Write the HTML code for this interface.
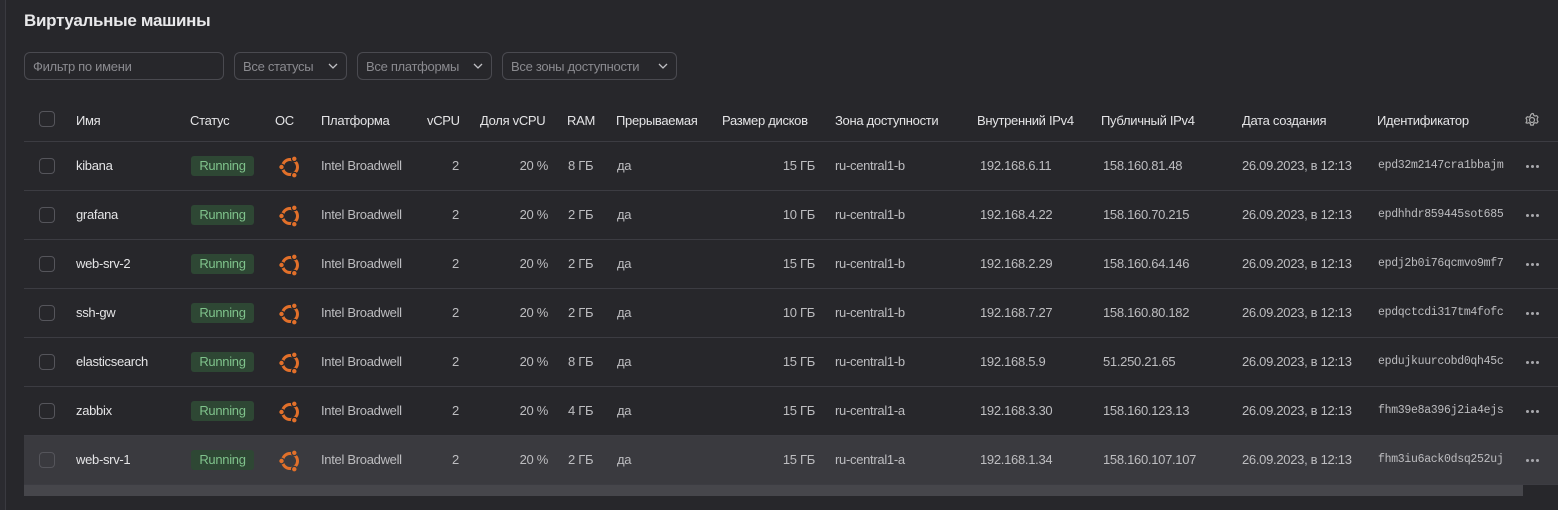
<!DOCTYPE html>
<html><head><meta charset="utf-8"><style>
*{margin:0;padding:0;box-sizing:border-box}
body{width:1558px;height:510px;background:#27272b;font-family:"Liberation Sans","DejaVu Sans",sans-serif;font-size:13px;color:#bdbdc0;position:relative;overflow:hidden;letter-spacing:-0.3px}
.a{position:absolute;white-space:nowrap}
.leftbar{position:absolute;left:0;top:0;width:6px;height:510px;background:#2b2b30;border-right:1px solid #3a3a40}
h1{position:absolute;left:24px;top:11px;font-size:17px;font-weight:bold;color:#e8e8ea;letter-spacing:-0.3px}
.inp{position:absolute;top:52px;height:28px;border:1px solid #4a4a50;border-radius:6px;color:#8a8a8f;padding:6px 8px;font-size:13px}
.inp svg{position:absolute;right:8px;top:10px}
.row{position:absolute;left:24px;width:1534px;height:49px;border-bottom:1px solid #3c3c42}
.hl{background:#3a3a3f}
.cb{position:absolute;left:15px;width:16px;height:16px;border:1px solid #55555b;border-radius:4px;top:16px}
.h{color:#e4e4e6;top:113px}
.badge{position:absolute;left:167px;top:14px;width:63px;height:20px;background:#2e4734;border-radius:3px;color:#7fc28b;text-align:center;line-height:20px}
.t{position:absolute;top:16px}
.r{text-align:right}
.m{font-family:"Liberation Mono","DejaVu Sans Mono",monospace;font-size:11.5px;color:#bdbdc0;width:134px;overflow:hidden;top:17px}
.dots{position:absolute;left:1502px;top:23px}
.dots i{display:inline-block;width:3px;height:3px;border-radius:50%;background:#a8a8ad;margin-right:2px;vertical-align:top}
</style></head><body>
<div class="leftbar"></div>
<h1>Виртуальные машины</h1>
<div class="inp" style="left:24px;width:200px">Фильтр по имени</div>
<div class="inp" style="left:234px;width:113px">Все статусы<svg width="10" height="6"><path d="M1 1l4 4 4-4" stroke="#c0c0c4" fill="none" stroke-width="1.3"/></svg></div>
<div class="inp" style="left:357px;width:135px">Все платформы<svg width="10" height="6"><path d="M1 1l4 4 4-4" stroke="#c0c0c4" fill="none" stroke-width="1.3"/></svg></div>
<div class="inp" style="left:502px;width:175px">Все зоны доступности<svg width="10" height="6"><path d="M1 1l4 4 4-4" stroke="#c0c0c4" fill="none" stroke-width="1.3"/></svg></div>

<div class="row" style="top:96px;height:46px"><div class="cb" style="top:15px"></div></div>
<div class="a h" style="left:76px">Имя</div>
<div class="a h" style="left:190px">Статус</div>
<div class="a h" style="left:275px">ОС</div>
<div class="a h" style="left:321px">Платформа</div>
<div class="a h" style="left:427px">vCPU</div>
<div class="a h" style="left:480px">Доля vCPU</div>
<div class="a h" style="left:567px">RAM</div>
<div class="a h" style="left:616px">Прерываемая</div>
<div class="a h" style="left:722px">Размер дисков</div>
<div class="a h" style="left:835px">Зона доступности</div>
<div class="a h" style="left:977px">Внутренний IPv4</div>
<div class="a h" style="left:1101px">Публичный IPv4</div>
<div class="a h" style="left:1242px">Дата создания</div>
<div class="a h" style="left:1377px">Идентификатор</div>
<svg class="a" style="left:1524px;top:112px" width="16" height="16" viewBox="0 0 16 16"><circle cx="8" cy="8" r="2.5" fill="none" stroke="#aaa" stroke-width="1.2"/><path d="M8 1.5l1.3.2.4 1.6 1.4.8 1.6-.5 1.3 1.5-.8 1.5v1.6l.8 1.5-1.3 1.5-1.6-.5-1.4.8-.4 1.6H6.7l-.4-1.6-1.4-.8-1.6.5L2 10.8l.8-1.5V7.7L2 6.2l1.3-1.5 1.6.5 1.4-.8.4-1.6z" fill="none" stroke="#aaa" stroke-width="1.2" stroke-linejoin="round"/></svg>

<div id="rows"></div>
<div class="a" style="left:24px;top:485px;width:1499px;height:11px;background:#46464b"></div>
<script>
const d=[["kibana","8","15","b","192.168.6.11","158.160.81.48","epd32m2147cra1bbajm"],
["grafana","2","10","b","192.168.4.22","158.160.70.215","epdhhdr859445sot685"],
["web-srv-2","2","15","b","192.168.2.29","158.160.64.146","epdj2b0i76qcmvo9mf7"],
["ssh-gw","2","10","b","192.168.7.27","158.160.80.182","epdqctcdi317tm4fofc"],
["elasticsearch","8","15","b","192.168.5.9","51.250.21.65","epdujkuurcobd0qh45c"],
["zabbix","4","15","a","192.168.3.30","158.160.123.13","fhm39e8a396j2ia4ejs"],
["web-srv-1","2","15","a","192.168.1.34","158.160.107.107","fhm3iu6ack0dsq252uj"]];
let h="";
d.forEach((r,i)=>{const top=142+i*49;const bg=i==6?'#3a3a3f':'#27272b';
h+=`<div class="row${i==6?' hl':''}" style="top:${top}px">
<div class="cb"></div>
<div class="t" style="left:52px;color:#e4e4e6">${r[0]}</div>
<div class="badge">Running</div>
<svg class="a" style="left:252px;top:11px" width="28" height="28" viewBox="0 0 28 28"><circle cx="14" cy="14" r="7.5" fill="none" stroke="#e2702a" stroke-width="3"/><circle cx="5.5" cy="14" r="2.8" fill="#e2702a" stroke="${bg}" stroke-width="1.2"/><circle cx="18.3" cy="5.8" r="2.8" fill="#e2702a" stroke="${bg}" stroke-width="1.2"/><circle cx="18.3" cy="22.2" r="2.8" fill="#e2702a" stroke="${bg}" stroke-width="1.2"/></svg>
<div class="t" style="left:297px">Intel Broadwell</div>
<div class="t" style="left:428px">2</div>
<div class="t r" style="left:460px;width:64px">20 %</div>
<div class="t" style="left:544px">${r[1]} ГБ</div>
<div class="t" style="left:593px">да</div>
<div class="t r" style="left:700px;width:91px">${r[2]} ГБ</div>
<div class="t" style="left:811px">ru-central1-${r[3]}</div>
<div class="t" style="left:956px">${r[4]}</div>
<div class="t" style="left:1079px">${r[5]}</div>
<div class="t" style="left:1218px">26.09.2023, в 12:13</div>
<div class="a m" style="left:1354px">${r[6]}</div>
<div class="dots"><i></i><i></i><i></i></div></div>`});
document.getElementById('rows').innerHTML=h;
</script>
</body></html>
